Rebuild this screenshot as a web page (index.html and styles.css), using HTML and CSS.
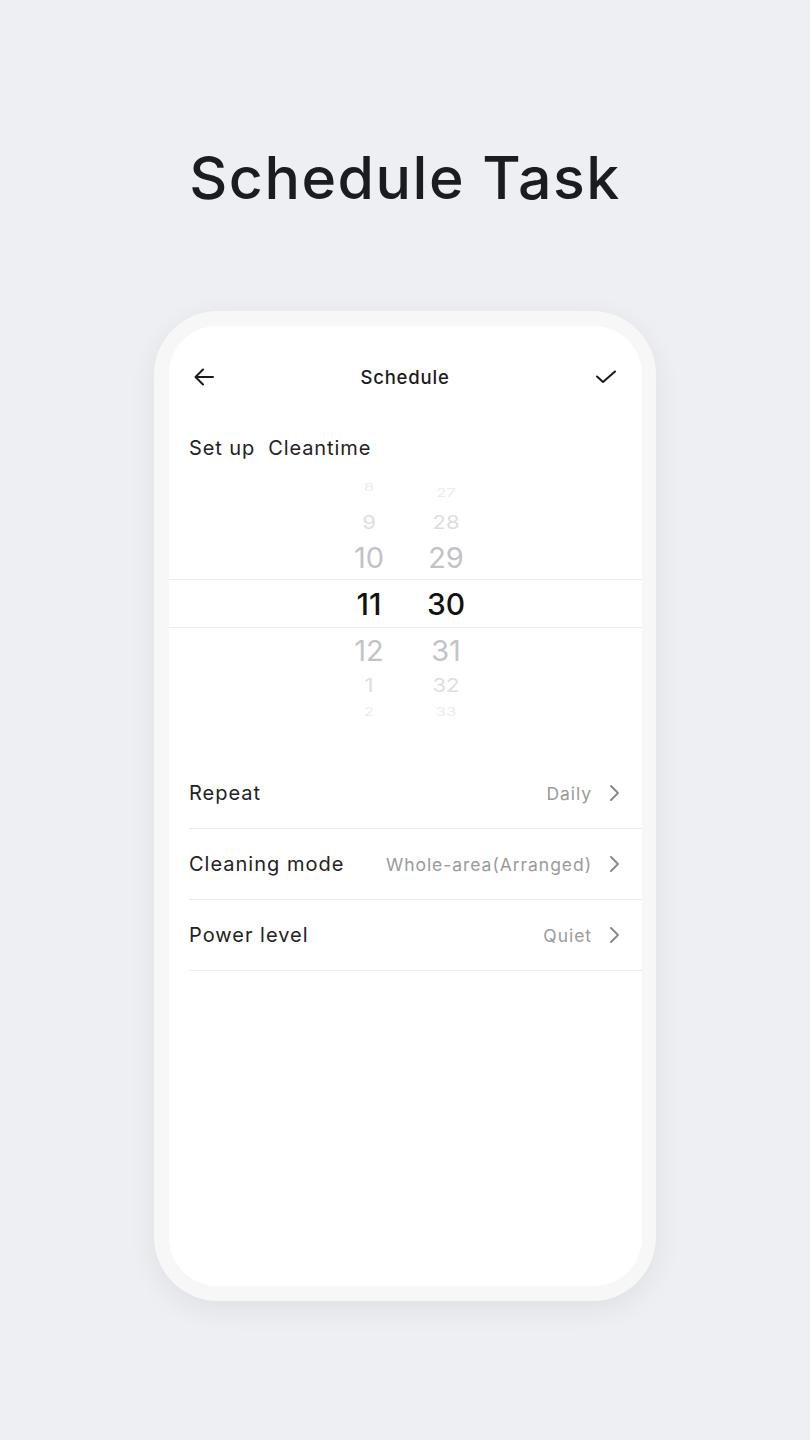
FILE: index.html
```html
<!DOCTYPE html>
<html lang="en">
<head>
<meta charset="utf-8">
<title>Schedule Task</title>
<link rel="stylesheet" href="styles.css">
</head>
<body>
<main class="page">
  <h1 class="headline">Schedule Task</h1>
  <div class="phone">
    <div class="screen">
      <header class="topbar">
        <svg class="icon" width="24" height="24" viewBox="0 0 24 24" fill="none" stroke="#1a1a1a" stroke-width="2" stroke-linecap="round" stroke-linejoin="round"><path d="M21 12H3.5M11 4.5L3.5 12L11 19.5"/></svg>
        <span class="topbar-title">Schedule</span>
        <svg class="icon" width="24" height="24" viewBox="0 0 24 24" fill="none" stroke="#1a1a1a" stroke-width="2" stroke-linecap="round" stroke-linejoin="round"><path d="M3 11.5L9 17L21 6.5"/></svg>
      </header>
      <p class="setup">Set up&nbsp; Cleantime</p>
      <div class="picker">
        <div class="band"></div>
        <div class="wheel wheel-h">
          <span class="it far top">8</span>
          <span class="it near">9</span>
          <span class="it adj up">10</span>
          <span class="it sel">11</span>
          <span class="it adj down">12</span>
          <span class="it near">1</span>
          <span class="it far bot">2</span>
        </div>
        <div class="wheel wheel-m">
          <span class="it far top">27</span>
          <span class="it near">28</span>
          <span class="it adj up">29</span>
          <span class="it sel">30</span>
          <span class="it adj down">31</span>
          <span class="it near">32</span>
          <span class="it far bot">33</span>
        </div>
      </div>
      <ul class="settings">
        <li class="row"><span class="label">Repeat</span><span class="value">Daily</span><svg class="chev" width="12" height="18" viewBox="0 0 12 18" fill="none" stroke="#8a8a8a" stroke-width="2" stroke-linecap="round" stroke-linejoin="round"><path d="M3 2L10 9L3 16"/></svg></li>
        <li class="row"><span class="label">Cleaning mode</span><span class="value">Whole-area(Arranged)</span><svg class="chev" width="12" height="18" viewBox="0 0 12 18" fill="none" stroke="#8a8a8a" stroke-width="2" stroke-linecap="round" stroke-linejoin="round"><path d="M3 2L10 9L3 16"/></svg></li>
        <li class="row"><span class="label">Power level</span><span class="value">Quiet</span><svg class="chev" width="12" height="18" viewBox="0 0 12 18" fill="none" stroke="#8a8a8a" stroke-width="2" stroke-linecap="round" stroke-linejoin="round"><path d="M3 2L10 9L3 16"/></svg></li>
      </ul>
    </div>
  </div>
</main>
</body>
</html>
```
FILE: styles.css
```css
* { box-sizing: border-box; }
html, body { margin: 0; padding: 0; }
body {
  background: #eeeff2;
  font-family: Inter, "Open Sans", sans-serif;
  color: #1c1c1e;
  width: 810px;
  height: 1440px;
  overflow: hidden;
}
.page {
  display: flex;
  flex-direction: column;
  align-items: center;
}
.headline {
  margin: 140px 0 0;
  height: 76px;
  line-height: 76px;
  font-size: 59px;
  font-weight: 500;
  letter-spacing: 1.5px;
  color: #1b1c20;
}
.phone {
  margin-top: 95px;
  width: 502px;
  height: 990px;
  padding: 15px 14px 15px 15px;
  background: #f7f7f8;
  border-radius: 64px;
  box-shadow: 0 8px 28px rgba(40, 44, 60, 0.07);
}
.screen {
  width: 100%;
  height: 100%;
  background: #ffffff;
  border-radius: 48px;
  overflow: hidden;
  display: flex;
  flex-direction: column;
}
.topbar {
  margin-top: 30px;
  height: 42px;
  padding: 0 24px 0 23px;
  display: flex;
  align-items: center;
  justify-content: space-between;
}
.topbar-title {
  font-size: 18.5px;
  font-weight: 500;
  letter-spacing: 0.8px;
  color: #1c1c1e;
}
.icon { display: block; }
.setup {
  margin: 36px 0 0 20px;
  height: 28px;
  line-height: 28px;
  font-size: 20px;
  letter-spacing: 0.9px;
  color: #222;
}
.picker {
  position: relative;
  margin-top: 16px;
  height: 240px;
  flex-shrink: 0;
  display: flex;
  justify-content: center;
  align-items: flex-start;
  gap: 17px;
  padding-left: 4px;
  overflow: hidden;
}
.band {
  position: absolute;
  left: 0;
  right: 0;
  top: 101px;
  height: 49px;
  border-top: 1px solid #ededee;
  border-bottom: 1px solid #ededee;
}
.wheel {
  width: 60px;
  display: flex;
  flex-direction: column;
  align-items: center;
  flex-shrink: 0;
}
.it {
  display: flex;
  align-items: center;
  justify-content: center;
  width: 100%;
  line-height: 1;
  flex-shrink: 0;
}
.far { font-size: 17px; color: #ececee; transform: scaleY(0.7); }
.top { height: 30px; }
.bot { height: 26px; }
.near { height: 28px; font-size: 22px; color: #dddde0; transform: scaleY(0.85); }
.adj { font-size: 29px; color: #c3c3c7; }
.up { height: 43px; }
.down { height: 42px; }
.sel { height: 50px; font-size: 30px; color: #111; font-weight: 500; }
.wheel-h .top { transform: translateY(-6px) scaleY(0.6); }
.settings {
  list-style: none;
  margin: 40px 0 0 20px;
  padding: 0;
}
.row {
  height: 71px;
  display: flex;
  align-items: center;
  padding-right: 22px;
  border-bottom: 1px solid #ebebec;
}
.label {
  flex: 1;
  font-size: 20px;
  letter-spacing: 1px;
  color: #222;
}
.value {
  font-size: 17.5px;
  letter-spacing: 0.95px;
  color: #9a9a9c;
  margin-right: 16px;
}
.chev { display: block; }
```
